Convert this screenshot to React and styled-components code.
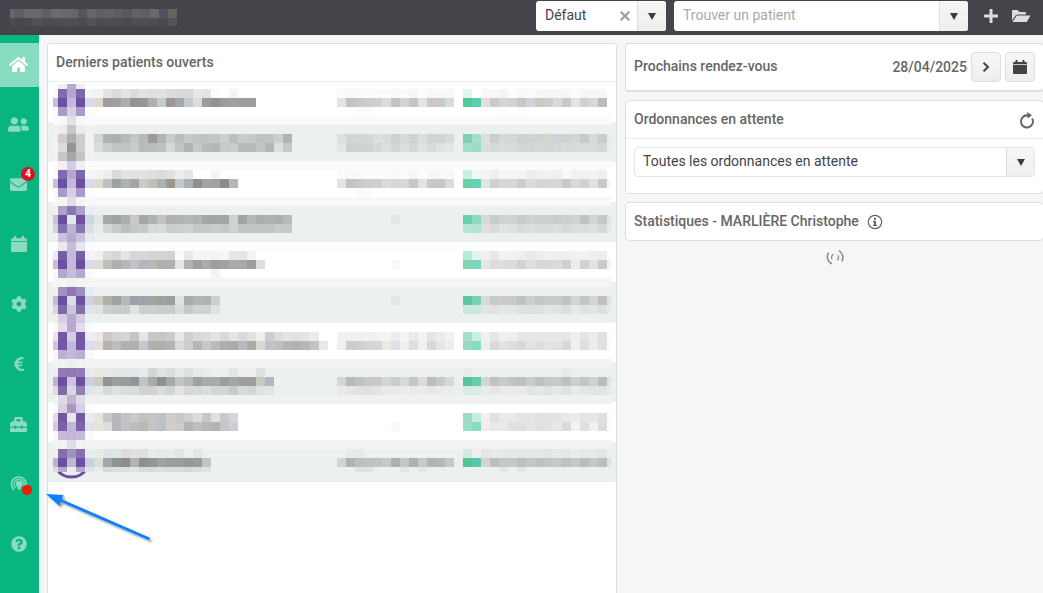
import React from "react";
import styled, { createGlobalStyle } from "styled-components";
import {
  FaHome,
  FaUserFriends,
  FaEnvelope,
  FaCog,
  FaEuroSign,
  FaToolbox,
  FaQuestionCircle,
  FaPlus,
} from "react-icons/fa";

const Global = createGlobalStyle`
  *, *::before, *::after { box-sizing: border-box; }
  body {
    margin: 0;
    overflow: hidden;
    background: #f5f7f6;
    color: #444;
    font: 14px/20px Roboto, "Liberation Sans", sans-serif;
  }
  button, input, select { font: inherit; color: inherit; }
`;

const Page = styled.div`
  display: flex;
  flex-direction: column;
  min-height: 100vh;
`;

const TopBar = styled.header`
  display: flex;
  align-items: flex-start;
  gap: 8px;
  height: 35px;
  padding: 1px 11px 0 10px;
  background: #46444a;
`;

const AccountName = styled.div`
  flex: 1;
  padding-top: 8px;
  svg { display: block; }
`;

const Combo = styled.div`
  display: flex;
  width: ${(p) => p.$width}px;
  height: 30px;
  overflow: hidden;
  border-radius: 3px;
  background: #fff;
`;

const ComboInput = styled.input`
  flex: 1;
  min-width: 0;
  padding: 0 9px 2px;
  border: 0;
  outline: 0;
  background: transparent;
  &::placeholder { color: #aaa; opacity: 1; }
`;

const PlainButton = styled.button`
  display: grid;
  place-items: center;
  padding: 0;
  border: 0;
  background: none;
  color: ${(p) => p.$color || "inherit"};
  width: ${(p) => p.$width || 22}px;
`;

const ArrowButton = styled(PlainButton)`
  border-left: 1px solid #ddd;
  background: linear-gradient(#f6f6f6, #efefef);
`;

const TopActions = styled.div`
  display: flex;
  gap: 8px;
  height: 30px;
  padding-left: 4px;
`;

const Body = styled.div`
  display: flex;
  flex: 1;
`;

const SideNav = styled.nav`
  display: flex;
  flex-direction: column;
  gap: 16px;
  width: 39px;
  padding-top: 8px;
  background: #08b57f;
`;

const NavLink = styled.a`
  position: relative;
  display: grid;
  place-items: center;
  height: 44px;
  padding: 0 2px 2px 0;
  color: ${(p) => (p.$active ? "#fff" : "#8adcc1")};
  background: ${(p) => (p.$active ? "#86dbc0" : "transparent")};
`;

const CountBadge = styled.span`
  position: absolute;
  top: 4px;
  right: 4px;
  width: 14px;
  height: 14px;
  border-radius: 50%;
  background: #d9141e;
  color: #fff;
  font-size: 10px;
  font-weight: 700;
  line-height: 14px;
  text-align: center;
`;

const DotBadge = styled.span`
  position: absolute;
  right: 7px;
  bottom: 12px;
  width: 10px;
  height: 10px;
  border-radius: 50%;
  background: #f81500;
`;

const Main = styled.main`
  position: relative;
  display: grid;
  grid-template-columns: 15fr 11fr;
  gap: 8px;
  flex: 1;
  padding: 8px 0 0 8px;
`;

const Card = styled.section`
  border: 1px solid #dcdfde;
  border-bottom-width: ${(p) => (p.$heavy ? 2 : 1)}px;
  border-radius: 4px;
  background: #fff;
`;

const PatientsCard = styled(Card)`
  border-bottom: 0;
  border-radius: 4px 4px 0 0;
`;

const CardHeader = styled.div`
  display: flex;
  align-items: center;
  gap: 8px;
  height: 37px;
  padding: 0 8px;
  box-sizing: content-box;
  border-bottom: ${(p) => (p.$divided ? "1px solid #eaeded" : "0")};
`;

const Title = styled.h2`
  margin: 0;
  padding-bottom: 2px;
  color: #666;
  font-size: 14px;
  font-weight: 500;
  line-height: 20px;
`;

const Column = styled.div`
  display: flex;
  flex-direction: column;
  gap: 8px;
  margin-right: -1px;
`;

const PatientList = styled.ul`
  position: relative;
  margin: 0;
  padding: 0;
  list-style: none;
`;

const PatientRow = styled.li`
  height: 40px;
  background: #fff;
  &:nth-child(even) { background: #ecf0ef; }
`;

const MaskLayer = styled.svg`
  position: absolute;
  top: 2px;
  left: 5px;
`;

const Appointments = styled.div`
  display: flex;
  align-items: center;
  gap: 4px;
  padding: 8px;
  ${Title} { flex: 1; }
`;

const DateLabel = styled.time`
  color: #666;
  font-weight: 500;
`;

const ToolButton = styled.button`
  display: grid;
  place-items: center;
  width: 30px;
  height: 30px;
  padding: 0;
  border: 1px solid #dedede;
  border-radius: 4px;
  background: linear-gradient(#f7f7f7, #eee);
  color: #444;
`;

const Spacer = styled.span`
  flex: 1;
`;

const CardBody = styled.div`
  padding: 8px 8px 16px;
`;

const SelectBox = styled.div`
  display: grid;
  grid-template-columns: 1fr 28px;
  height: 30px;
  overflow: hidden;
  border: 1px solid #e5e5e5;
  border-radius: 4px;
`;

const Select = styled.select`
  grid-area: 1 / 1 / 2 / 3;
  appearance: none;
  height: 28px;
  padding: 0 36px 2px 8px;
  border: 0;
  outline: 0;
  background: transparent;
`;

const SelectArrow = styled.span`
  grid-area: 1 / 2;
  display: grid;
  place-items: center;
  border-left: 1px solid #ddd;
  background: linear-gradient(#f6f6f6, #efefef);
  pointer-events: none;
`;

const Loading = styled.div`
  display: flex;
  justify-content: center;
  svg { display: block; }
`;

const PointerArrow = styled.svg`
  position: absolute;
  top: 457px;
  left: 7px;
  pointer-events: none;
`;

const Caret = () => (
  <svg width="8" height="7" viewBox="0 0 8 7" aria-hidden="true">
    <path d="M0 0h8L4 7z" fill="#3c3c3c" />
  </svg>
);

const CalendarIcon = ({ size = 14 }) => (
  <svg width={size} height={size} viewBox="0 1 14 14" aria-hidden="true">
    <path d="M2.500 1h2v2h5V1h2v2H13q1 0 1 1v1.300H0V4q0-1 1-1h1.500zM0 6h14v8q0 1-1 1H1q-1 0-1-1z" fill="currentColor" />
  </svg>
);

const FolderIcon = () => (
  <svg width="20" height="14" viewBox="0 0 20 14" aria-hidden="true">
    <path d="M1 11.500V2q0-1 1-1h4.500l2 2H14q1 0 1 1v1.500H6.500L4.500 6.500z" fill="currentColor" />
    <path d="M1.500 13 5.300 7.200q.4-.6 1.200-.6H19.500L16 12.400q-.4.600-1.200.6z" fill="currentColor" />
  </svg>
);

const SupportIcon = () => (
  <svg width="18" height="18" viewBox="0 0 18 18" fill="none" stroke="currentColor" aria-hidden="true">
    <path d="M4 15A7.400 7.400 0 1 1 14.500 14.200" strokeWidth="1.600" />
    <path d="M5.700 12.900a4.900 4.900 0 1 1 8-2" strokeWidth="1.300" />
    <circle cx="9.200" cy="9" r="3.300" fill="currentColor" stroke="none" />
    <path d="M7.200 11h4l-.6 3.500H7.800z" fill="currentColor" stroke="none" />
  </svg>
);

const RefreshIcon = () => (
  <svg width="16" height="18" viewBox="0 0 16 18" fill="none" aria-hidden="true">
    <path d="M9.500 4.100A6 6 0 1 0 13.200 7" transform="translate(0 .5)" stroke="#666" strokeWidth="2" />
    <path d="M8 1 13 4.300 8.700 7.500z" fill="#666" />
  </svg>
);

const InfoIcon = () => (
  <svg width="16" height="16" viewBox="0 0 16 16" aria-hidden="true">
    <circle cx="8" cy="8" r="6.700" fill="none" stroke="#666" strokeWidth="1.200" />
    <path d="M7 3.800h2v1.900H7zM6 6.800h3v4h1V12H6v-1.200h1V8H6z" fill="#666" />
  </svg>
);

/* Masked cells: "." is empty, two digits are a grey, six digits a colour. */
const CELL = 9;
const toColor = (code) => (code.length === 2 ? `#${code}${code}${code}` : `#${code}`);

const W = "ffffff";
const S = "ecf0ef";
const ROW_BACKS = [
  W, W, W, W, "fafafa", S, S, S, S, "fbfbfb", W, W, W, "f8f8f8", S, S, S, S, "fdfdfd", W, W, W,
  "f4f6f5", S, S, S, S, W, W, W, W, "f2f4f3", S, S, S, "f0f2f1", W, W, W, W, "f2f4f3", S, S, S,
];

const AVATARS = [
  ". f2edf3 b8abd2 eeedf6 .",
  "f9 8069ae b4a6cf 7d66ad f3f6fd",
  "cfbbd6 6951a3 c3b9da 6e4f9e d8daef",
  "fa a99bc9 d8cfe5 a99bc9 f9fbfe",
  "fa f7 e3e0ed f7f7fb fa",
  "f0f2f1 ebeceb c6 eaeceb eff2f1",
  "f0f2f1 ce ae cd f1f3f2",
  "f3f4f4 dc 94 ce f1f3f2",
  "eff2f1 c4c7c6 a6 c1c4c3 eff2f1",
  "fb f3eff4 d2cde3 eeeef6 fb",
  "f9 8069ae b4a6cf 7d66ad f3f6fd",
  "cfbbd6 6951a3 c3b9da 6e4f9e d8daef",
  "fa a99bc9 d8cfe5 a99bc9 f9fbfe",
  "f8 f5 e1dee9 f3f3f7 f8",
  "eff1f1 b0a0c6 8b76b2 a9a0cb e8edf0",
  "cdc0d4 6850a0 e3e8ea 6e509f d1d6e4",
  "d8cfdd 8372b1 bdb4d2 8874b0 d8e1e8",
  "eef1f1 cbc4d9 b6abd0 c8c2dc e8ecf0",
  "fc ede8ef c7bddb e8e7f1 fbfcfd",
  "f0e9f1 775da7 c5bada 785fa8 f1f4fc",
  "d0b9d5 6a50a2 c4b9da 6b509f d8daef",
  "f9f8fa b4a6d0 c6bddb b2a8d1 fafbfe",
  "f4f6f5 f3f5f4 eff1f1 f2f5f4 f4f6f5",
  "eff1f1 a48fbd 8d76b2 9a8fc0 e7ecf0",
  "c8b8d1 6750a0 dadce5 704f9d cdd2e4",
  "dbd3e0 7e6aab cbc6db 8270ac dce4ec",
  "eff1f1 d5cfdf b7abd0 d2cee1 ecf0f0",
  "f8 e5ddeb b6a8cf e1ddef f9fafd",
  "efe2ef 7359a5 d6d0e5 7457a3 e9edf9",
  "d9bedb 7259a5 c3b9da 7558a4 dadcef",
  "f8f7f9 c0afd4 c4b9d9 bab0d6 f8fafd",
  "f2f4f3 eff2f1 eceff0 eff2f3 f2f4f3",
  "ebeeee 937ab1 8f78b4 8f7eb8 e5ebef",
  "c4b0ce 6851a0 cbc6dc 714f9d cdd0e3",
  "e2d9e5 806ba9 d8d7e1 9280b2 dde5ec",
  "f0f2f1 dfdbe4 c0b4d2 dddbe8 f0f2f1",
  "f9f8fa d9cfe2 a695c5 d3cde5 fafbfd",
  "e6d9e8 7058a3 e9e6f1 7358a3 e7ecf8",
  "d8c8df 7b63ac c1b7d9 7e64aa dee1f2",
  "f9 c8b7d7 c2b7d9 c5bcdd f9fbfd",
  "f2f4f3 eff2f1 dedde5 eff2f3 f2f4f3",
  "edf0ef 846eae a092c0 8670ad e6edee",
  "bfb0cc 6951a0 bfb8d2 6d509f cbcfe1",
  "dfd8e3 b4a7cc e9ecec b4a7cc dfe3ec",
];

const NAMES = {
  1: "f2 e4 da e4 dc e4e3e2 df e1 dc d8 d8 e9e8e7 e4 fafbfc . f5",
  2: "dfd9cf 9d9d9b 9ba1a5 adaeac 919492 9b9691 adb0ae c5cccc 9d9697 a3a8ab c3c9cc ddddd5 9c 93 999ea2 a1 9c 9c",
  6: "d5d6cf b0b4b3 a9b2b5 b5b9b8 c1c7c6 b6b9b7 9c9b99 b2b4af c9ccca b5bfc2 c8cac8 bec5c3 bec6c3 c4c7c5 cad0d4 bcbfba c9cdcb c8cac9 bcc3c1 bfc5c3 cfcfc8 aab5b9",
  7: "dcddd7 cacfcd bdc6c5 bec6c4 cbccc5 b5bcc1 bcbcba c0c2bf d5d8d5 bfc5c3 b2b3b1 c4cacb bababa b4b5b4 c8ccc9 cbcec8 b8bbba b5bbc1 c5c5c0 b1b8b6 dddfd8 c3c8cb",
  10: "f3f3f1 ee d7dbda e0e3e3 dfe2e2 e4e1e0 dde0df d9dbdc dfe1e1 ebedee e4e5e6 . . f5",
  11: "e0dad1 bebfbe a1 acb3b8 a4 c9cacb c3bdb6 abb2b6 9d978e c6c7c9 acb1b5 928f8d a4 9fa1a3 8e8b89 b2b8be",
  15: "e2e6e4 a9a8a4 9ba3a6 abadae cac9c7 a1a7a5 b0b3b2 c4c3c1 afb1ad adb7ba b6b8b1 adb7b7 a2a8aa a8a59e a0a8aa ced1cf 9ca5aa b5b8b6 a9aeb1 afb2b1 a9b0b2 b8bbba",
  16: "e9ecea d2d5d0 c8ccca bcbfbc c4c8c6 c8cac8 d5dada d9dcd9 cacecc c7d1d3 ced2cb c4cac9 c4cacb cccdc8 c4c8c6 cfd2d1 bec4c8 c2c5c3 c2c5c3 c1c5c2 c6cccc c7cac8",
  19: "f1eeeb dc d7 e5 d5d7da d6d8da d3 d4 d2 f8fafc e7e9e7 f6 f4 f3f5f4 f7 e5e7e6 e3e6e6 f4",
  20: "e1dcd5 be ae b8b7b7 c0c2c5 b1b7bf b7 ae b1 e4e6e8 b1 9fa0a3 acaaab 9e9e9c a3a09f a9aaae a8 9d9c98 dbdee2",
  21: ". . . . . . . . . . . . . f4",
  24: "cdcdc4 adb0ae 9fa2a1 b7bab8 9ca3a6 9ba5ac a2a5a4 9f9f9c 999e9f dee4e6 aaaca6 b2b5b4 aeb2b0 cbd0d1",
  25: "e1e3dd cbcfcd c7cbc9 c9cccb dfe5e4 cacfcd cbcfcd c9cccb c9cecc d8dcda c7cac8 d1d4d2 ced2d0 dfe4e3",
  28: "ece9e6 cac9c5 d2 d3d5d7 c3c4c4 e5 c9c7c5 c7c6c3 cacdce e8 cf d9d9db db e5e3e1 d6dada e6e5e2 d8dada e3e1dd f0f0ea cacdcd dd e4 e2 e5 eb",
  29: "e5dfdb b3 bcbdbf adb1b4 b1b0b1 c6c9cc b1b0ad b0afad b3 d9 cfcdcb b5 c4c8cd bb ae aaaba8 b8bac0 aaaaa6 d8d8d4 c1c4c4 bebfbe b5 b1b2b5 b9b7b6 c3c4c7 e7e8eb",
  32: "e6eae5 e7e9e8 e2e6e4 e2e6e4 e3e6e4 e8ebe8 d3d7d4 dfe3e1 dbdfdc e6e9e7 dde1df e6e9e7 e9ecea . . e3e7e4 . . dce0de",
  33: "cbcbc1 91938f 9b9f9d 999da0 91959a c0c4c2 a8aba8 91908b a4aaa8 c4c4c1 b8bab5 9ba2a4 a8acaf aeaca6 989fa3 a3a7a7 9ea09f a09e9a c8c9c3 afb8bf",
  34: "e5e9e3 d6dad8 dce4e3 d6dfde d9dcd8 ced2d3 d0d2cf d9ded8 cfd5d3 e0e4e2 d6d8d4 d5d9da dbdfdc d3d7d3 d1d5d5 c7cac9 d7dddd d2d6d4 dfe3e1 e1e5e4",
  37: "e7e3de c8 b7b8bb c1c5c5 cfcbc9 bec2c3 c7c5c3 bcc1c8 d0cecb c9c8c5 cecfd0 dadddd c6c7ca dfdfe0 cac9c6 d2d7dd",
  38: "e8e2dd dd b6b7ba c3 b9bcc0 bdb7b3 c5 bcc0c7 cfceca cb b4 bcbfbd b7b9b9 b3 c6 cbcfd3",
  41: "e7ebe8 e0e5e3 e1e6e4 dadddb dee1df dce0dd e9ecea e5eae8 e8eceb e2e6e3 eaeeec e3e6e3",
  42: "dddfd5 a0a7a9 8f9497 918b82 b0b4b2 8d908d 92979a 9ea2a6 999d9d 999d9b 959a98 989d9e c1c6c7",
  43: "e8ebe8 d7dbd8 dadedc dcdfdb e0e4e2 d9ddda d8dbd8 dbe0dd d9ddda d8dbd9 d5d9d6 d9dddb e0e4e2",
};

const PALE_DATE = "fb f9 fafafb fb fc fb f9f9f8 fb f6f7f7 fc f6f7f6 f8 f8";
const DATES = {
  1: PALE_DATE,
  2: "e4e3e1 c3c2c0 c8c8c8 cbced1 d2ced0 dc c1c3c2 d4 c7c4c0 e0e4e5 cec7c6 c7cbcd da",
  3: ". . fb fb",
  6: "dde0dc d3d6d3 d3d6d5 d5d8d7 dce0df d8dcdb ccd0d0 d5dadb cfd2cf d9dfdf d0d4d3 cfd4d4 d8dbd9",
  7: "e3e7e5 ced2cf ced1cf cfd2d1 d6dad7 dde0de d3d7d4 dbdfdd d5d9d6 dde3e4 d8dcd9 dee2e1 e3e7e4",
  10: PALE_DATE,
  11: "e4e3e1 c3c2c0 c8c8c8 cbced1 d2ced0 dc d4d6d8 d7 c9c5c1 e0e4e5 cec7c6 c2c7ca da",
  12: ". . fb fb",
  15: ". . . . . . e4e8e6",
  20: ". . . . . . f9",
  24: ". . . . . . e4e8e6",
  28: "f1 ef eff0f1 f0f1f2 f3f2f1 f5f4f2 eaecf1 f3f3f1 e9eaed f4f3f1 e6e5e6 ec f1",
  29: "ef cc cf d4d4d8 d8d6d4 ebe9e7 dfe1e8 efefed dedee3 f1f1ee dcd7d4 e3e6e9 ed",
  33: "d5d7d3 b9b9b7 c0c2c0 c5c9c9 c9c8c7 d5d6cf c5ccd2 d8dbd3 c2c5cb dadcd5 c0bdb9 c3cbcf d5d9d7",
  34: "e8ebe9 e4e7e5 dfe2e1 dde1df e3e6e4 e8ebea e6e9e8 e9ecea e8ebe8 e9eceb e4e7e5 e8ebea eaedeb",
  38: ". . . . . . f9",
  41: ". e8ece8 e6eae7",
  42: "d2d4d0 b2b3b1 bcbfbe bec4c4 c3c3be c8cbca adafb2 c4c9c5 b0b0aa c6cbc9 b4b4ae b3b8bc c5c8c6",
  43: ". . dfe2e0 dfe2e0 . . . e3e6e4 . e4e7e5",
};

const STATES = {
  1: "e3f4ed . f9f8f7 f7 f4 fcfdfd f9 fb f7 f6 f6 f8 fb f7 f7 f7",
  2: "57c799 59ceb0 e4dfdb cb d5d5d6 d0d3d3 c7 d1d3d6 ccc9c5 d0cdc9 d9dbdf c9 e1e5e3 d1 dad8d7 bbbcc0",
  3: ". . . . fc . fc",
  6: "7dd1b2 a1dece dcdfdb c9cdcf d6d9d5 d3d7d5 ced1d1 cfd5d6 cfd2cf d1d6d0 cbd5d8 cfd3d0 d5d6cf c4cbce d8dbd5 c8ccce e5ebee",
  7: "a5dec8 9edbcb dadedc d7dad8 d9dedd d9dcda d4d7d6 d3d7d5 d6d9d6 d2d6d4 d5dad8 d8dbd9 d6dcdb d8dcdb d8dbd9 d5d8d7 e8eced",
  10: "caeedf eef9f7 f4f3f3 ee f8f6f5 f2f4f6 f4 ecedef f0 f2f1ef ee f8 f1 f2 f3 edeef0",
  11: "6bd0aa 67d2b8 e5e4e0 d0 d7 d8d6d6 caccd0 dc d4 d9d5d4 d8d8dc c9 dbd8d5 cbd1d7 e1 c9c8c9 f2f9fd",
  15: "6bcea9 8bd8c4 d9dad6 c7cccd d0d3d1 d0d3d2 c9cdc9 cfd2cf ccd0d0 ced0cb c8cfd2 cbd0d0 d2d3cd c0c4c8 d4d5cd c3c9cb dfe7ec",
  16: "b7e3d3 b1e2d7 dee1df d9dcda e0e4e2 dde1df d8dcd9 dbdfdc d9ddd9 d8dcda dbdfdd d7dad8 dce0dd d9dddb dee0d9 d5d9d8 e2e8ed",
  19: "b8e8d8 dcf5ef f0 e7 f3 f1 ee e7e9ec ec f0 eceef0 ef f0f1f0 f2 ee ed",
  20: "7fd4b5 77d6c0 e8e6e4 dddcdf dcdddf db d0d2d5 dfdfdf d7 d9d7d8 dadbe0 d0cfd0 ebedeb d2 e2 cccac9 ebf3fb",
  24: "5dc79f 77d2b9 d9dad5 c7cacd cccbc9 c7cac8 c0c2c0 cbcfd1 c5c7c5 cacbc5 c6cccf c1c4c3 d2d5d3 c3c6c6 d2d5d2 be dbe4eb",
  25: "cae7dd cae6de e1e4e2 dfe2e0 e3e7e5 e3e6e4 dfe2e0 dde1dc dee2df e2e5e1 dfe3e1 dce0dd e6ebe9 dfe2e0 e2e5e3 dce0de e5eaed",
  28: "a3dfca c9efe6 f0 e7e5e7 f0 ee e7e5e5 e7e5e5 e8e6e5 e8e7e5 e5e6eb e6 eeeff1 e6e4e4 eeede8 dfe0e2 f9fcfd",
  29: "98dac1 87dcc5 ee dbdada e3 dcdedd d8dad9 e3 dddde0 e5e2e0 e2 d7 f0 dedee1 ec dfdfdf f9fdff",
  32: "e7ece9 . . . . . . . . . . e8ebe9",
  33: "54c49b 66cbb1 d3d6d5 c3c1bd c8cbc9 c1c4c3 bec0be c9cccd bfc1bf c8c7c0 c4cbce bdc1bf cdd1cf c2c5c4 d1d2cc bbbcbd dbe5ea",
  34: "d9eae4 d9eae5 e9ecea e4e7e5 e8ebe9 e8ebe9 e8ebe9 e0e4e2 e4e8e6 e0e4e1 e5e9e7 dfe3e1 e8ebe9 e2e6e4 e1e5e2 e1e5e3 e6eaeb",
  37: "9bdcc6 c7ece4 f0 e0e0e1 ea e9 e3 e3e4e8 e3e1e0 e4e2e1 e2e2e7 e9 ec e4e4e7 e5 dedee1 f8fbfd",
  38: "9ddec7 88dcc6 f0efed e8e8ea ea e0 dfdfde e5 e2e1e0 e3 e6e7ec da f1f3f2 e0 f0f0ef dd f6fbfd",
  41: "d4e9e1 ecefee e4e8e4 e8ebe9 e6eae7 e6eae7 e6eae7 e3e7e5 e6e9e7 e3e7e4 e7ebea e5e9e6 eaedec e6e9e7 e7eae7 e2e6e4",
  42: "4ec497 55c9ad d4d5d0 bdbec0 c6c8c7 c4c8c9 bcc0bf c4c8c7 bfc3c0 c5c5bf c3cacd bec2c3 cac7c4 b4bdc1 cac7c3 bac0c0 dce3e9",
  43: ". . . . e4e7e5 . e4e7e5",
};

function maskCells() {
  const cells = [];
  ROW_BACKS.forEach((back, row) => {
    const y = row * CELL - 4;
    cells.push(<rect key={`b${row}`} x="0" y={y} width="558" height={CELL} fill={toColor(back)} />);
    const groups = [[0, AVATARS[row]], [5, NAMES[row]], [32, DATES[row]], [46, STATES[row]]];
    groups.forEach(([start, codes]) => {
      if (!codes) return;
      codes.split(" ").forEach((code, i) => {
        if (code === ".") return;
        const col = start + i;
        cells.push(
          <rect key={`${row}-${col}`} x={col * CELL - 4} y={y} width={CELL} height={CELL} fill={toColor(code)} />
        );
      });
    });
  });
  return cells;
}

const ACCOUNT_CELLS = [
  "65666f 5f5d61 69686d 67686e 5f6064 6b6c70 68696c 66676a 56575c 65666b 5e5f65 62636a 5c5d62 57585e 626367 5d5e63 686a6e 53505f 656563",
  "4e4c52 49474c 4c4a50 515156 4b4c50 4b4d51 4d5055 4d4e53 4b4b50 525359 4b4c51 4d4f53 4d4e52 4a4b4f 4e4f53 4d4e52 4c4d51 4a494f 53535a",
];

const AccountMask = () => (
  <svg width="167" height="17" role="img" aria-label="Utilisateur" shapeRendering="crispEdges">
    {ACCOUNT_CELLS.map((line, row) =>
      line.split(" ").map((code, i) => (
        <rect key={`${row}-${i}`} x={i * CELL - 4} y={row * CELL} width={CELL} height={CELL} fill={toColor(code)} />
      ))
    )}
  </svg>
);

const NAV = [
  { label: "Accueil", icon: <FaHome size={19} />, active: true },
  { label: "Patients", icon: <FaUserFriends size={21} /> },
  { label: "Messagerie", icon: <FaEnvelope size={17} />, count: 4 },
  { label: "Agenda", icon: <CalendarIcon size={16} /> },
  { label: "Paramètres", icon: <FaCog size={16} /> },
  { label: "Comptabilité", icon: <FaEuroSign size={16} /> },
  { label: "Outils", icon: <FaToolbox size={17} /> },
  { label: "Assistance", icon: <SupportIcon />, dot: true },
  { label: "Aide", icon: <FaQuestionCircle size={16} /> },
];

export default function App() {
  return (
    <Page>
      <Global />
      <TopBar>
        <AccountName><AccountMask /></AccountName>
        <Combo $width={130}>
          <ComboInput aria-label="Profil" defaultValue="Défaut" />
          <PlainButton type="button" aria-label="Effacer" $color="#999" $width={24}>
            <svg width="10" height="10" viewBox="0 0 10 10" stroke="currentColor" strokeWidth="2">
              <path d="M.7.7l8.600 8.600M9.300.7.7 9.300" />
            </svg>
          </PlainButton>
          <ArrowButton type="button" aria-label="Choisir un profil" $width={29}><Caret /></ArrowButton>
        </Combo>
        <Combo $width={294}>
          <ComboInput aria-label="Trouver un patient" placeholder="Trouver un patient" />
          <ArrowButton type="button" aria-label="Liste des patients" $width={29}><Caret /></ArrowButton>
        </Combo>
        <TopActions>
          <PlainButton type="button" aria-label="Ajouter" $color="#ddd"><FaPlus size={16} /></PlainButton>
          <PlainButton type="button" aria-label="Dossiers" $color="#ddd"><FolderIcon /></PlainButton>
        </TopActions>
      </TopBar>
      <Body>
        <SideNav>
          {NAV.map((item) => (
            <NavLink key={item.label} href="#" aria-label={item.label} $active={item.active}>
              {item.icon}
              {item.count && <CountBadge>{item.count}</CountBadge>}
              {item.dot && <DotBadge />}
            </NavLink>
          ))}
        </SideNav>
        <Main>
          <PatientsCard>
            <CardHeader $divided><Title>Derniers patients ouverts</Title></CardHeader>
            <PatientList>
              {Array.from({ length: 10 }, (_, i) => <PatientRow key={i} />)}
              <MaskLayer width="558" height="396" aria-hidden="true">
                <path d="M3.500 385a18 18 0 0 0 30 0" fill="none" stroke="#6a4ea3" strokeWidth="3" />
                <svg width="558" height="388" shapeRendering="crispEdges">{maskCells()}</svg>
              </MaskLayer>
            </PatientList>
          </PatientsCard>
          <Column>
            <Card $heavy>
              <Appointments>
                <Title>Prochains rendez-vous</Title>
                <DateLabel dateTime="2025-04-28">28/04/2025</DateLabel>
                <ToolButton type="button" aria-label="Jour suivant">
                  <svg width="8" height="10" viewBox="0 0 8 10" fill="none" stroke="currentColor" strokeWidth="2">
                    <path d="M1.500.7 6 5 1.500 9.300" />
                  </svg>
                </ToolButton>
                <ToolButton type="button" aria-label="Ouvrir le calendrier"><CalendarIcon /></ToolButton>
              </Appointments>
            </Card>
            <Card>
              <CardHeader $divided>
                <Title>Ordonnances en attente</Title>
                <Spacer />
                <PlainButton type="button" aria-label="Actualiser" $width={16}><RefreshIcon /></PlainButton>
              </CardHeader>
              <CardBody>
                <SelectBox>
                  <SelectArrow><Caret /></SelectArrow>
                  <Select aria-label="Ordonnances">
                    <option>Toutes les ordonnances en attente</option>
                  </Select>
                </SelectBox>
              </CardBody>
            </Card>
            <Card>
              <CardHeader>
                <Title>Statistiques - MARLIÈRE Christophe</Title>
                <InfoIcon />
              </CardHeader>
            </Card>
            <Loading role="status" aria-label="Chargement">
              <svg width="18" height="18" viewBox="0 0 18 18" fill="none" stroke="#888" strokeWidth="1.500">
                <path d="M2.600 3.600A8 8 0 0 0 5.800 15M13 1.700A8 8 0 0 1 15.800 12.500" />
                <path d="M7.300 5.200A4.200 4.200 0 0 0 6 10.300M11.200 11.300A4.200 4.200 0 0 0 12 6.200" strokeWidth="1.200" />
              </svg>
            </Loading>
          </Column>
          <PointerArrow width="112" height="56" viewBox="0 0 112 56" aria-hidden="true">
            <defs>
              <filter id="soft" x="-10%" y="-10%" width="130%" height="130%">
                <feDropShadow dx="2" dy="2" stdDeviation="1" floodColor="#000" floodOpacity=".4" />
              </filter>
            </defs>
            <g filter="url(#soft)">
              <path d="M14 8 103.500 47" stroke="#0a80ff" strokeWidth="2.800" />
              <path d="M0 2 17.500 3 15 8.500 13.500 14z" fill="#0a80ff" />
            </g>
          </PointerArrow>
        </Main>
      </Body>
    </Page>
  );
}
